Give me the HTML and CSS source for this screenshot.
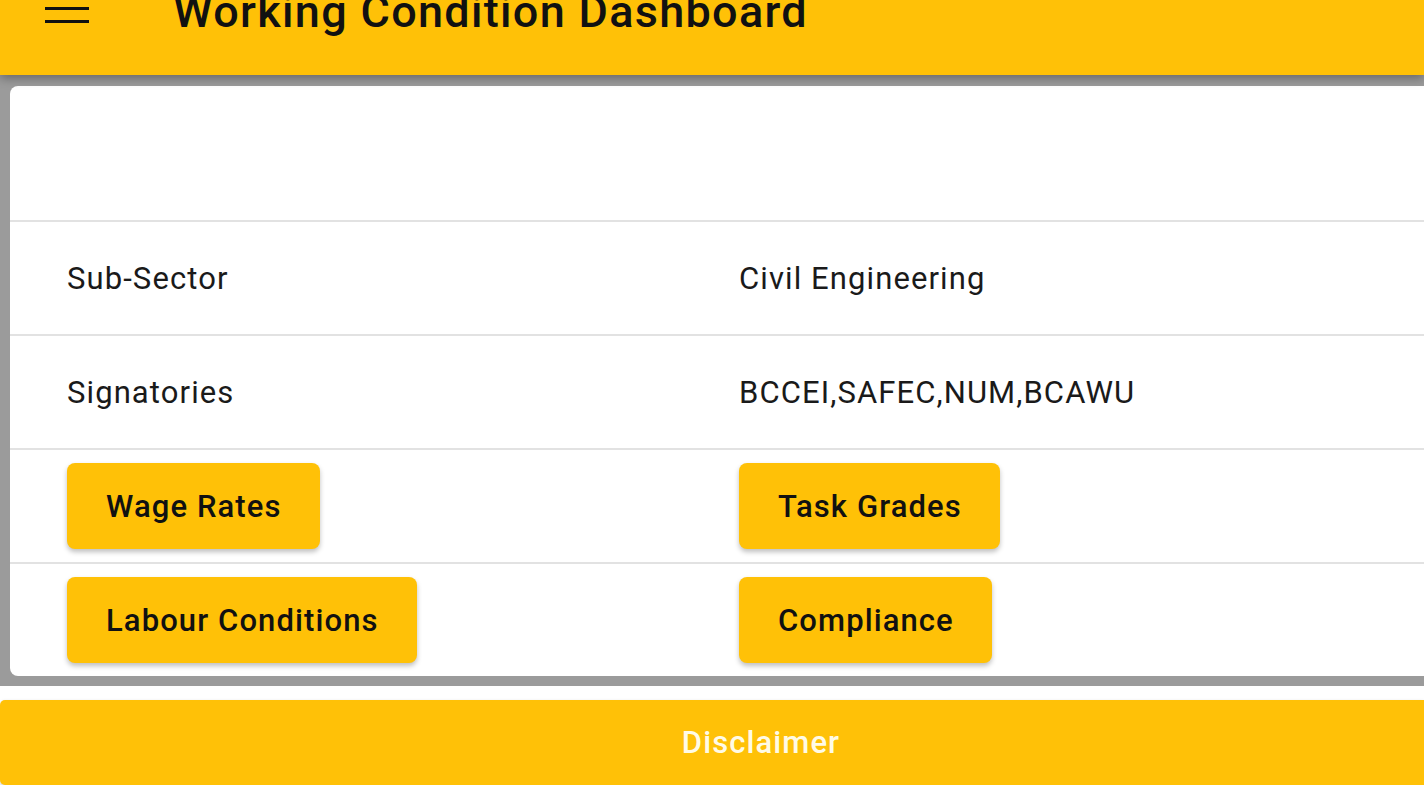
FILE: index.html
```html
<!DOCTYPE html>
<html lang="en">
<head>
<meta charset="utf-8">
<title>Working Condition Dashboard</title>
<link rel="stylesheet" href="styles.css">
</head>
<body>
<header class="appbar">
  <div class="appbar-inner">
    <svg class="menu-icon" width="44" height="44" viewBox="0 0 44 44" aria-hidden="true">
      <rect x="0" y="4" width="44" height="3" fill="#111"/>
      <rect x="0" y="17" width="44" height="3" fill="#111"/>
      <rect x="0" y="30" width="44" height="3" fill="#111"/>
    </svg>
    <h1 class="title">Working Condition Dashboard</h1>
  </div>
</header>
<main class="stage">
  <section class="card">
    <div class="row row-empty"></div>
    <div class="row">
      <div class="cell label">Sub-Sector</div>
      <div class="cell value">Civil Engineering</div>
    </div>
    <div class="row">
      <div class="cell label">Signatories</div>
      <div class="cell value">BCCEI,SAFEC,NUM,BCAWU</div>
    </div>
    <div class="row">
      <div class="cell"><button class="btn">Wage Rates</button></div>
      <div class="cell"><button class="btn">Task Grades</button></div>
    </div>
    <div class="row">
      <div class="cell"><button class="btn">Labour Conditions</button></div>
      <div class="cell"><button class="btn">Compliance</button></div>
    </div>
  </section>
</main>
<div class="gap"></div>
<footer class="disclaimer">Disclaimer</footer>
</body>
</html>
```

FILE: styles.css
```css
html, body {
  margin: 0;
  padding: 0;
  background: #ffffff;
  overflow: hidden;
  font-family: Roboto, "Noto Sans", "Liberation Sans", sans-serif;
}

.appbar {
  position: relative;
  z-index: 2;
  height: 75px;
  background: #ffc107;
  box-shadow: 0 3px 10px rgba(0, 0, 0, 0.35);
  overflow: hidden;
}

.appbar-inner {
  display: flex;
  align-items: center;
  margin-top: -18px;
  height: 60px;
  padding-left: 45px;
}

.menu-icon {
  flex: none;
  width: 44px;
  height: 44px;
}

.title {
  margin: 0 0 0 84px;
  font-size: 45px;
  font-weight: 500;
  letter-spacing: 1.3px;
  color: #111111;
  line-height: 60px;
  white-space: nowrap;
}

.stage {
  background: #9b9b9b;
  padding: 11px 0 10px 10px;
}

.card {
  background: #ffffff;
  border-radius: 8px 0 0 8px;
  height: 590px;
  overflow: hidden;
}

.row {
  display: grid;
  grid-template-columns: 672px 1fr;
  align-items: center;
  height: 112px;
  padding-left: 57px;
  border-top: 2px solid #e2e2e2;
}

.row-empty {
  height: 134px;
  border-top: none;
}

.cell {
  font-size: 31px;
  letter-spacing: 1.1px;
  color: #1a1a1a;
}

.btn {
  height: 86px;
  padding: 0 38px 0 39px;
  border: none;
  border-radius: 8px;
  background: #ffc107;
  color: #111111;
  font-family: inherit;
  font-size: 31px;
  font-weight: 500;
  letter-spacing: 1.1px;
  box-shadow: 0 3px 5px rgba(0, 0, 0, 0.25);
}

.gap {
  height: 14px;
}

.disclaimer {
  display: flex;
  align-items: center;
  justify-content: center;
  height: 85px;
  padding-left: 98px;
  background: #ffc107;
  border-radius: 5px 0 0 5px;
  color: #fffbe6;
  font-size: 31px;
  font-weight: 500;
  letter-spacing: 1.1px;
  box-shadow: 0 2px 4px rgba(0, 0, 0, 0.2);
}
```
